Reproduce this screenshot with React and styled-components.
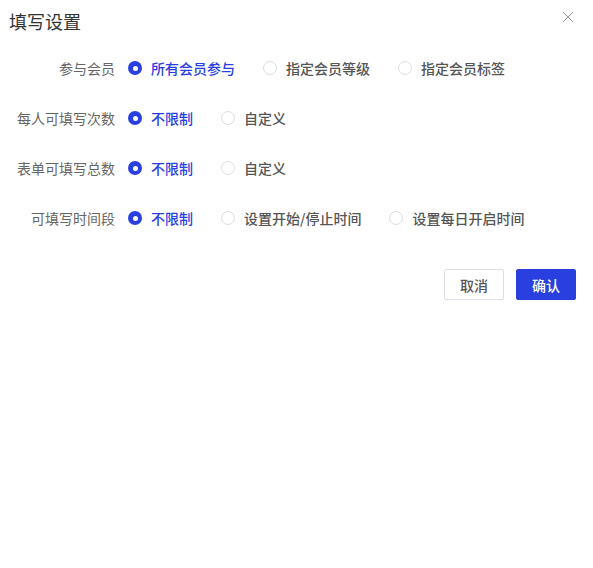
import React, { useState } from "react";
import styled, { createGlobalStyle } from "styled-components";

const Global = createGlobalStyle`
  html, body { margin: 0; padding: 0; background: #fff; }
  body { font-family: "Noto Sans CJK SC", "Noto Sans", sans-serif; }
  * { box-sizing: border-box; }
`;

const Dialog = styled.div`
  width: 593px;
  height: 568px;
  background: #fff;
  position: relative;
  padding: 0 17px 0 0;
`;

const Header = styled.div`
  height: 43px;
  display: flex;
  align-items: center;
  padding: 0 0 2px 9px;
`;

const Title = styled.h1`
  margin: 0;
  font-size: 18px;
  font-weight: 400;
  color: #333;
  line-height: 24px;
`;

const Close = styled.button`
  position: absolute;
  top: 11px;
  right: 19px;
  width: 12px;
  height: 12px;
  padding: 0;
  border: none;
  background: none;
  cursor: pointer;
  display: flex;
`;

const Form = styled.div`
  display: flex;
  flex-direction: column;
`;

const Row = styled.div`
  height: 50px;
  display: flex;
  align-items: center;
`;

const Label = styled.div`
  width: 115px;
  text-align: right;
  font-size: 14px;
  color: #666;
  margin-right: 13px;
  line-height: 20px;
`;

const Option = styled.label`
  display: flex;
  align-items: center;
  margin-right: 28px;
  cursor: pointer;
  font-size: 14px;
  font-weight: 500;
  line-height: 20px;
  color: ${(p) => (p.$checked ? "#2a3fe0" : "#555")};
`;

const Dot = styled.span`
  width: 14px;
  height: 14px;
  border-radius: 50%;
  margin-right: 9px;
  flex-shrink: 0;
  border: ${(p) => (p.$checked ? "none" : "1px solid #dcdde6")};
  background: ${(p) => (p.$checked ? "#2a3fe0" : "#fff")};
  display: flex;
  align-items: center;
  justify-content: center;
  &::after {
    content: "";
    display: ${(p) => (p.$checked ? "block" : "none")};
    width: 5px;
    height: 5px;
    border-radius: 50%;
    background: #fff;
  }
`;

const Footer = styled.div`
  display: flex;
  justify-content: flex-end;
  gap: 12px;
  margin-top: 26px;
`;

const Button = styled.button`
  width: 60px;
  height: 31px;
  border-radius: 2px;
  font-family: inherit;
  font-size: 14px;
  font-weight: 500;
  cursor: pointer;
  border: 1px solid ${(p) => (p.$primary ? "#2a3fe0" : "#dcdde6")};
  background: ${(p) => (p.$primary ? "#2a3fe0" : "#fff")};
  color: ${(p) => (p.$primary ? "#fff" : "#555")};
  padding: 0;
`;

const rows = [
  { label: "参与会员", options: ["所有会员参与", "指定会员等级", "指定会员标签"] },
  { label: "每人可填写次数", options: ["不限制", "自定义"] },
  { label: "表单可填写总数", options: ["不限制", "自定义"] },
  { label: "可填写时间段", options: ["不限制", "设置开始/停止时间", "设置每日开启时间"] },
];

export default function App() {
  const [values, setValues] = useState(rows.map(() => 0));
  return (
    <>
      <Global />
      <Dialog>
        <Header>
          <Title>填写设置</Title>
        </Header>
        <Close aria-label="close">
          <svg width="12" height="12" viewBox="0 0 12 12">
            <path d="M1 1L11 11M11 1L1 11" stroke="#999" strokeWidth="1" />
          </svg>
        </Close>
        <Form>
          {rows.map((r, i) => (
            <Row key={r.label}>
              <Label>{r.label}</Label>
              {r.options.map((o, j) => (
                <Option
                  key={o}
                  $checked={values[i] === j}
                  onClick={() => setValues(values.map((v, k) => (k === i ? j : v)))}
                >
                  <Dot $checked={values[i] === j} />
                  {o}
                </Option>
              ))}
            </Row>
          ))}
        </Form>
        <Footer>
          <Button>取消</Button>
          <Button $primary>确认</Button>
        </Footer>
      </Dialog>
    </>
  );
}
